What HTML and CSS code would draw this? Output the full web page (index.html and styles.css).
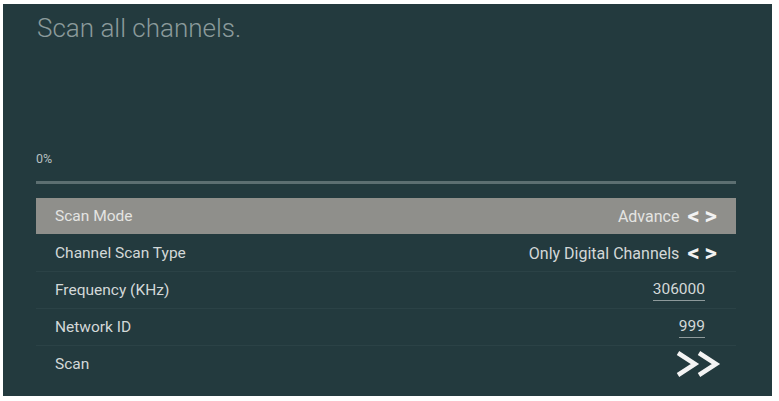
FILE: index.html
```html
<!DOCTYPE html>
<html lang="en">

<head>
    <meta charset="UTF-8">
    <title>Scan all channels</title>
    <link rel="stylesheet" href="styles.css">
</head>

<body>
    <div class="panel">
        <h1 class="title">Scan all channels.</h1>

        <div class="progress">
            <span class="percent">0%</span>
            <div class="bar"></div>
        </div>

        <ul class="menu">
            <li class="row selected">
                <span class="label">Scan Mode</span>
                <span class="value">Advance <span class="arrows">&lt;&gt;</span></span>
            </li>
            <li class="row">
                <span class="label">Channel Scan Type</span>
                <span class="value">Only Digital Channels <span class="arrows">&lt;&gt;</span></span>
            </li>
            <li class="row">
                <span class="label">Frequency (KHz)</span>
                <span class="value"><span class="input">306000</span></span>
            </li>
            <li class="row">
                <span class="label">Network ID</span>
                <span class="value"><span class="input">999</span></span>
            </li>
            <li class="row last">
                <span class="label">Scan</span>
                <span class="value">
                    <!-- double chevron -->
                    <svg class="go" viewBox="0 0 46 28" width="46" height="28">
                        <path d="M3 3 L20 14 L3 25" />
                        <path d="M24 3 L41 14 L24 25" />
                    </svg>
                </span>
            </li>
        </ul>
    </div>
</body>

</html>
```

FILE: styles.css
```css
body {
    margin: 0;
    background: #ffffff;
    font-family: Roboto, "Liberation Sans", sans-serif;
}

.panel {
    margin: 4px 0 0 3px;
    width: 769px;
    height: 392px;
    box-sizing: border-box;
    padding: 0 36px 0 33px;
    background: #233a3e;
    display: flex;
    flex-direction: column;
}

.title {
    margin: 9px 0 0 1px;
    font-size: 26px;
    font-weight: 300;
    line-height: 30px;
    color: #8b9a9b;
}

.progress {
    margin-top: 109px;
}

.percent {
    display: block;
    font-size: 12.5px;
    line-height: 14px;
    color: #b7c0c0;
}

.bar {
    margin-top: 15px;
    height: 3px;
    background: #5d6f71;
}

.menu {
    list-style: none;
    margin: 14px 0 0;
    padding: 0;
}

.row {
    display: flex;
    justify-content: space-between;
    align-items: center;
    height: 36px;
    padding: 0 18px 0 19px;
    border-bottom: 1px solid #2b4246;
    font-size: 15.5px;
    color: #d3d8d8;
}

.row.selected {
    background: #8f8f8b;
    color: #e4e4e2;
    border-bottom-color: #233a3e;
}

.row.last {
    border-bottom: none;
}

.value {
    display: flex;
    align-items: center;
    gap: 8px;
    font-size: 16px;
}

.arrows {
    margin-right: -4px;
    font-size: 24px;
    font-weight: 700;
    line-height: 24px;
    letter-spacing: 5px;
    color: #f2f2f2;
}

.input {
    margin-right: 13px;
    padding-bottom: 2px;
    border-bottom: 1px solid #8e9a9b;
    font-size: 15.5px;
    color: #d3d8d8;
}

.go {
    margin-right: -3px;
    fill: none;
    stroke: #f4f4f4;
    stroke-width: 4.5;
    stroke-linejoin: miter;
}
```
